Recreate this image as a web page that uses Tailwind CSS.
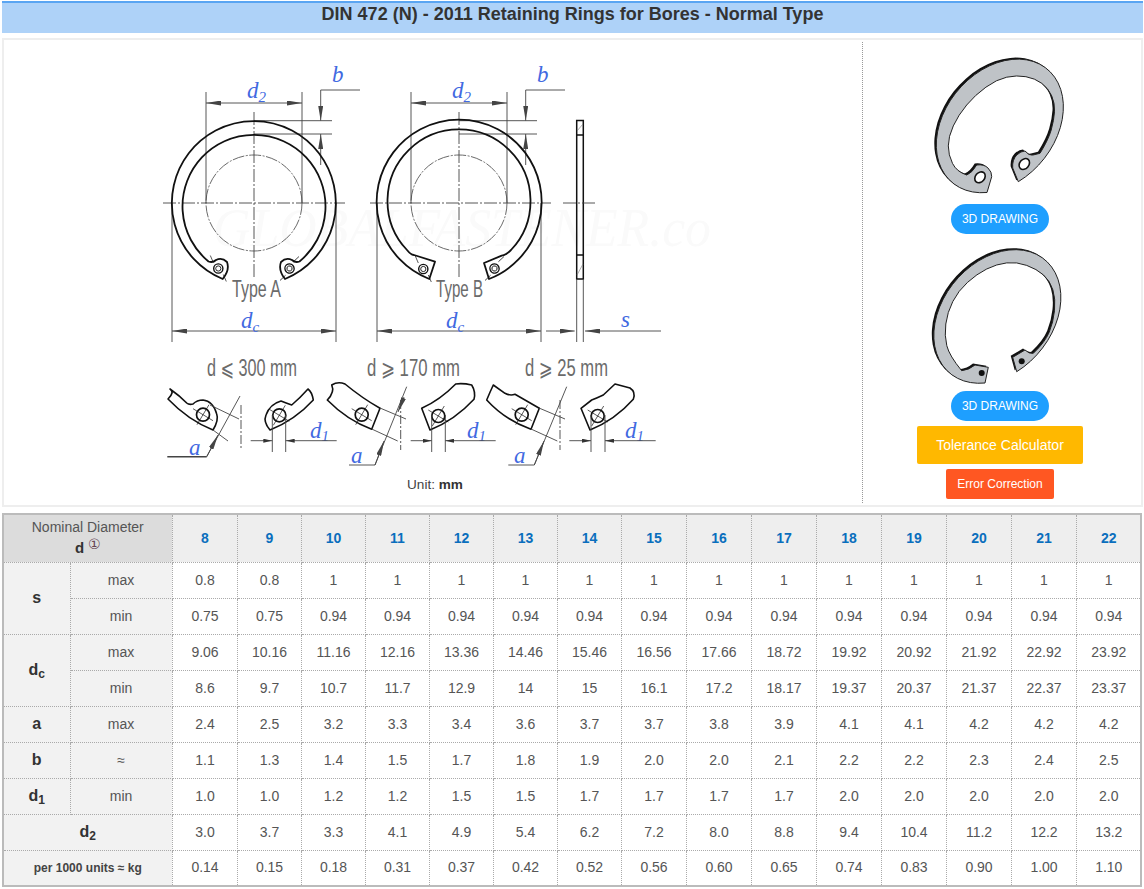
<!DOCTYPE html>
<html lang="en">
<head>
  <meta charset="UTF-8" />
  <title>DIN 472 (N) - 2011 Retaining Rings for Bores - Normal Type</title>
  <script src="https://cdn.jsdelivr.net/npm/@tailwindcss/browser@4"></script>
</head>
<body class="bg-white text-[#555] text-[14px] font-['Liberation_Sans',Arial,sans-serif]">
  <div class="w-[1141px] ml-[2px] pt-[1px]">
    <!-- title -->
    <h1 class="h-[32px] border-t-2 border-[#5aa5f2] bg-[#aed2f8] text-center text-[18px] leading-[23px] font-bold text-[#333]">DIN 472 (N) - 2011 Retaining Rings for Bores - Normal Type</h1>

    <!-- drawing panel -->
    <div class="flex h-[469px] mt-[5px] border-2 border-[#eee]">
      <div class="w-[859px] h-[461px] mt-[2px] border-r border-dotted border-[#999]">
        <svg class="block w-[858px] h-[432px]" viewBox="4 42 858 432" fill="none">
          <defs>
            <marker id="ar" markerUnits="userSpaceOnUse" markerWidth="15" markerHeight="5" refX="15" refY="2.5" orient="auto-start-reverse"><path d="M0 0L15 2.5L0 5z" fill="#444"/></marker>
            <marker id="as" markerUnits="userSpaceOnUse" markerWidth="9" markerHeight="4" refX="9" refY="2" orient="auto-start-reverse"><path d="M0 0L9 2L0 4z" fill="#333"/></marker>
            <g id="dims" stroke="#444" stroke-width="0.9">
              <path d="M206 92V203M302 92V203"/>
              <path d="M206 103H302" marker-start="url(#ar)" marker-end="url(#ar)"/>
              <path d="M254 120.7H332M254 134H332"/>
              <path d="M360 90H320.7V120.7" marker-end="url(#ar)"/>
              <path d="M320.7 165V134" marker-end="url(#ar)"/>
              <path d="M172 203V342M336 203V342"/>
              <path d="M172 331H336" marker-start="url(#ar)" marker-end="url(#ar)"/>
              <path d="M254 112V277" stroke-dasharray="13 2 2 2"/>
              <circle cx="254" cy="203" r="48" stroke-width="0.8" stroke-dasharray="12 1.5 2 1.5"/>
            </g>
            <g id="hole" stroke="#111">
              <circle r="6.5" stroke-width="1.7"/>
              <path d="M-10 -6L10 6M6 -10L-6 10" stroke-width="0.7"/>
            </g>
            <g id="ear" stroke="#111">
              <circle r="4.6" stroke-width="1.4"/>
              <circle r="2.6" stroke-width="0.9"/>
              <path d="M-8 -13L-5 -6M5 6L8 13" stroke-width="0.7"/>
            </g>
          </defs>

          <!-- watermark -->
          <text x="213" y="246" font-family="Liberation Serif" font-style="italic" font-size="54" fill="#fafafa" textLength="498" lengthAdjust="spacingAndGlyphs">GLOBALFASTENER.co</text>

          <!-- type A -->
          <use href="#dims"/>
          <path d="M163 203H345" stroke="#444" stroke-width="0.9" stroke-dasharray="13 2 2 2"/>
          <path d="M222.7 279A82 82 0 1 1 285 279Q278 270 281 262Q286 257 292 260Q295 263 299.5 261.5A71.5 71.5 0 1 0 208.5 261.5Q213 263 216 260Q222 257 227 262Q230 270 222.7 279Z" stroke="#111" stroke-width="1.8" stroke-linejoin="round"/>
          <use href="#ear" x="218.3" y="268.5"/>
          <use href="#ear" x="289.5" y="268.5" transform="rotate(70 289.5 268.5)"/>

          <!-- type B -->
          <use href="#dims" x="205"/>
          <path d="M370 203H551" stroke="#444" stroke-width="0.9" stroke-dasharray="13 2 2 2"/>
          <path d="M429.3 279A82.5 82.5 0 1 1 489 279L484 263L501.7 255.7Q506 255 511 250A71.5 71.5 0 1 0 407 250Q411 255 414 255L435 261.7Z" stroke="#111" stroke-width="1.8" stroke-linejoin="round"/>
          <use href="#ear" x="423.3" y="269"/>
          <use href="#ear" x="494.5" y="268.5" transform="rotate(70 494.5 268.5)"/>

          <!-- side view -->
          <rect x="576.7" y="120.5" width="6.6" height="158.5" stroke="#111" stroke-width="1.5"/>
          <path d="M576.7 135H583.3M576.7 255H583.3" stroke="#111" stroke-width="1.5"/>
          <path d="M577 131L583 124M577 275L583 264" stroke="#777" stroke-width="0.6"/>
          <path d="M563 203H597" stroke="#444" stroke-width="0.9" stroke-dasharray="13 2 2 2"/>
          <path d="M576.7 279V342M583.3 279V342" stroke="#444" stroke-width="0.9"/>
          <path d="M546 331H574.7" stroke="#444" stroke-width="0.9" marker-end="url(#ar)"/>
          <path d="M661 331H585" stroke="#444" stroke-width="0.9" marker-end="url(#ar)"/>

          <!-- labels -->
          <g font-family="Liberation Serif" font-style="italic" fill="#4169e1" font-size="23">
            <text x="247" y="98">d<tspan font-size="15" dy="4">2</tspan></text>
            <text x="332" y="82">b</text>
            <text x="241" y="328">d<tspan font-size="15" dy="4">c</tspan></text>
            <text x="452" y="98">d<tspan font-size="15" dy="4">2</tspan></text>
            <text x="537" y="82">b</text>
            <text x="446" y="328">d<tspan font-size="15" dy="4">c</tspan></text>
            <text x="621" y="327">s</text>
            <text x="189" y="455">a</text>
            <text x="351" y="463">a</text>
            <text x="514" y="463">a</text>
            <text x="310" y="438">d<tspan font-size="15" dy="3">1</tspan></text>
            <text x="467" y="438">d<tspan font-size="15" dy="3">1</tspan></text>
            <text x="625" y="438">d<tspan font-size="15" dy="3">1</tspan></text>
          </g>
          <g font-family="Liberation Sans, DejaVu Sans" fill="#6b6b6b" font-size="23">
            <text x="232" y="297" textLength="49" lengthAdjust="spacingAndGlyphs">Type A</text>
            <text x="436" y="297" textLength="47" lengthAdjust="spacingAndGlyphs">Type B</text>
            <text x="207" y="376" textLength="90" lengthAdjust="spacingAndGlyphs">d ⩽ 300 mm</text>
            <text x="367" y="376" textLength="93" lengthAdjust="spacingAndGlyphs">d ⩾ 170 mm</text>
            <text x="525" y="376" textLength="83" lengthAdjust="spacingAndGlyphs">d ⩾ 25 mm</text>
          </g>

          <!-- details of the lug ends -->
          <g stroke="#111" stroke-width="1.6" stroke-linejoin="round">
            <path d="M170 389Q175 392 168 399Q188 420 213 430Q219 420 216.7 414Q213 401 203 400Q197 400 193 404Q189 405 186.7 403Q180 396 170 389Z"/>
            <path d="M270 430Q263 422 266 415Q270 404 281 401Q286 403 291.7 405Q300 398 308 389Q312 392 313.3 400Q295 420 270 430Z"/>
            <path d="M345 384Q338 381 331.7 385Q335 392 327.3 400Q347 420 371.7 429.3L380 408.3Q362 398 345 384Z"/>
            <path d="M421.7 408.3L430 430Q455 420 474 399.3Q476 392 471.7 385Q463 383 455.7 384Q440 400 421.7 408.3Z"/>
            <path d="M493.3 385Q490 392 486.7 400Q505 420 531 429.3L539.3 408.3L515 394.3Q510 396 505 393.3Z"/>
            <path d="M581 408.3L590 430Q615 420 633.3 399.3Q636 392 630 388L615 384L603.3 395Q597 398 591.7 400Z"/>
          </g>
          <use href="#hole" x="203" y="414.7"/>
          <use href="#hole" x="279.3" y="415.3"/>
          <use href="#hole" x="361.7" y="414.7"/>
          <use href="#hole" x="438.3" y="416"/>
          <use href="#hole" x="521.7" y="414.7"/>
          <use href="#hole" x="597.7" y="416"/>

          <g stroke="#444" stroke-width="0.9">
            <path d="M210 405L239 419M213 430L228 441"/>
            <path d="M241 405V450" stroke-dasharray="9 2 2 2"/>
            <path d="M240 396L206.7 456.7"/>
            <path d="M206.7 456.7H167.3" stroke-width="1.5"/>
            <path d="M206.7 456.7L218 435" marker-end="url(#ar)"/>
            <path d="M272.3 415V452M285.7 415V452"/>
            <path d="M250.7 440.7H272.3" marker-end="url(#as)"/>
            <path d="M336.7 440.7H285.7" marker-end="url(#as)"/>

            <path d="M380 408L406 419M371.7 429L397.7 441"/>
            <path d="M400.7 400V450" stroke-dasharray="9 2 2 2"/>
            <path d="M406.7 386.7L375 465H349"/>
            <path d="M375 465L384 441" marker-end="url(#ar)"/>
            <path d="M398 412L404 397" marker-start="url(#ar)"/>
            <path d="M431.7 415V452M445.3 415V452"/>
            <path d="M410.7 440.7H431.7" marker-end="url(#as)"/>
            <path d="M495.7 440.7H445.3" marker-end="url(#as)"/>

            <path d="M539 408L565 419M531 429L557.3 441"/>
            <path d="M560 400V450" stroke-dasharray="9 2 2 2"/>
            <path d="M566.7 386.7L534.3 465H508.3"/>
            <path d="M534.3 465L544 441" marker-end="url(#ar)"/>
            <path d="M591 415V452M605 415V452"/>
            <path d="M569.3 440.7H591" marker-end="url(#as)"/>
            <path d="M655.7 440.7H605" marker-end="url(#as)"/>
          </g>
        </svg>
        <div class="mt-[1px] pl-[4px] text-center text-[13.6px] leading-5 text-[#444]">Unit: <b class="text-[#333]">mm</b></div>
      </div>

      <!-- 3D views and buttons -->
      <div class="w-[274px] flex flex-col items-center">
        <svg class="block w-[140px] h-[154px] mt-[10px]" viewBox="930 50 140 154">
          <g stroke-linejoin="round">
            <path transform="translate(-2 -1.5)" d="M987 192.5A74 55 -50 1 1 1018.3 181.7L1012.7 168Q1012 160 1016.7 155Q1021 151 1025 151Q1029 156 1033 155L1040 153.3Q1048.3 140 1051.2 130Q1054 120 1054.5 111.7Q1055 103.3 1051.7 95.8Q1048.3 88.3 1041.7 83.3Q1035 78.3 1025.9 76.7Q1016.7 75 1006.7 77.2Q996.7 79.3 985.9 87.2Q975 95 966.7 105Q958.3 115 953.3 125.9Q948.3 136.7 948.3 145.9Q948.3 155 952.5 163.4Q956.7 171.7 966.7 175Q972 173 976.7 165Q984 164 988 168Q992 172 991.7 176.7Z" fill="#111"/>
            <path d="M987 192.5A74 55 -50 1 1 1018.3 181.7L1012.7 168Q1012 160 1016.7 155Q1021 151 1025 151Q1029 156 1033 155L1040 153.3Q1048.3 140 1051.2 130Q1054 120 1054.5 111.7Q1055 103.3 1051.7 95.8Q1048.3 88.3 1041.7 83.3Q1035 78.3 1025.9 76.7Q1016.7 75 1006.7 77.2Q996.7 79.3 985.9 87.2Q975 95 966.7 105Q958.3 115 953.3 125.9Q948.3 136.7 948.3 145.9Q948.3 155 952.5 163.4Q956.7 171.7 966.7 175Q972 173 976.7 165Q984 164 988 168Q992 172 991.7 176.7Z" fill="#bfc3c7" stroke="#222" stroke-width="1"/>
          </g>
          <ellipse cx="980" cy="177.3" rx="6" ry="4.6" transform="rotate(-50 980 177.3)" fill="#fff" stroke="#111" stroke-width="1.6"/>
          <ellipse cx="1024.3" cy="164" rx="6" ry="4.6" transform="rotate(-50 1024.3 164)" fill="#fff" stroke="#111" stroke-width="1.6"/>
        </svg>
        <a class="w-[98px] h-[30px] rounded-full bg-[#1e9fff] text-white text-center text-[12px] leading-[30px]">3D DRAWING</a>
        <svg class="block w-[140px] h-[147px] mt-[8px]" viewBox="930 238 140 147">
          <g stroke-linejoin="round">
            <path transform="translate(-2 -1.5)" d="M985 379A74 55 -50 1 1 1016.7 367.7L1012.7 353.3L1025 346Q1029 350 1033.3 349.3Q1045 338.3 1049.2 328.3Q1053.3 318.3 1054.5 306.7Q1055.7 295 1052.9 285.9Q1050 276.7 1043.4 270.9Q1036.7 265 1026.7 261.4Q1016.7 257.7 1006.7 258.9Q996.7 260 986.7 265Q976.7 270 967.5 278.4Q958.3 286.7 952.8 297.5Q947.3 308.3 945.8 320Q944.3 331.7 946.8 341.7Q949.3 351.7 961.7 366.7Q969 366 975 361L988.3 363.3Z" fill="#111"/>
            <path d="M985 379A74 55 -50 1 1 1016.7 367.7L1012.7 353.3L1025 346Q1029 350 1033.3 349.3Q1045 338.3 1049.2 328.3Q1053.3 318.3 1054.5 306.7Q1055.7 295 1052.9 285.9Q1050 276.7 1043.4 270.9Q1036.7 265 1026.7 261.4Q1016.7 257.7 1006.7 258.9Q996.7 260 986.7 265Q976.7 270 967.5 278.4Q958.3 286.7 952.8 297.5Q947.3 308.3 945.8 320Q944.3 331.7 946.8 341.7Q949.3 351.7 961.7 366.7Q969 366 975 361L988.3 363.3Z" fill="#bfc3c7" stroke="#222" stroke-width="1"/>
          </g>
          <circle cx="981.7" cy="369" r="3" fill="#111"/>
          <circle cx="1021.7" cy="357.3" r="3" fill="#111"/>
        </svg>
        <a class="w-[98px] h-[30px] mt-[2px] rounded-full bg-[#1e9fff] text-white text-center text-[12px] leading-[30px]">3D DRAWING</a>
        <a class="w-[166px] h-[38px] mt-[5px] rounded-[2px] bg-[#ffb800] text-white text-center text-[14px] leading-[38px]">Tolerance Calculator</a>
        <a class="w-[108px] h-[30px] mt-[5px] rounded-[2px] bg-[#ff5722] text-white text-center text-[12px] leading-[30px]">Error Correction</a>
      </div>
    </div>

    <!-- size table -->
    <table class="mt-[6px] w-[1139px] table-fixed border-collapse border-2 border-[#bbb] text-center text-[14px] text-[#555] [&_td]:border [&_td]:border-dotted [&_td]:border-[#aaa] [&_td]:p-0 [&_th]:border [&_th]:border-dotted [&_th]:border-[#aaa] [&_th]:p-0 [&_tr]:h-[36px] [&_td:nth-last-child(-n+15)]:pl-[1px] [&_th:nth-last-child(-n+15)]:pl-[1px]">
      <colgroup>
        <col class="w-[67px]"><col class="w-[102px]">
        <col class="w-[65px]"><col class="w-[64px]"><col class="w-[64px]"><col class="w-[64px]"><col class="w-[64px]"><col class="w-[64px]"><col class="w-[64px]">
        <col class="w-[65px]"><col class="w-[65px]"><col class="w-[65px]"><col class="w-[65px]"><col class="w-[65px]"><col class="w-[65px]"><col class="w-[65px]"><col class="w-[65px]">
      </colgroup>
      <thead>
        <tr class="!h-[48px] bg-[#eee] text-[#0a6ebd] font-bold">
          <th colspan="2" class="bg-[#dcdcdc] font-normal text-[#555] leading-[17px]">Nominal Diameter<br><b class="text-[15px] text-[#333]">d</b> <span class="font-['DejaVu_Sans'] text-[14px] align-[4px] text-[#645]">①</span></th>
          <th>8</th><th>9</th><th>10</th><th>11</th><th>12</th><th>13</th><th>14</th><th>15</th><th>16</th><th>17</th><th>18</th><th>19</th><th>20</th><th>21</th><th>22</th>
        </tr>
      </thead>
      <tbody>
        <tr><td rowspan="2" class="bg-[#f2f2f2] font-bold text-[16px] text-[#333]">s</td><td class="bg-[#f2f2f2] pl-[1px]">max</td><td>0.8</td><td>0.8</td><td>1</td><td>1</td><td>1</td><td>1</td><td>1</td><td>1</td><td>1</td><td>1</td><td>1</td><td>1</td><td>1</td><td>1</td><td>1</td></tr>
        <tr><td class="bg-[#f2f2f2] pl-[1px]">min</td><td>0.75</td><td>0.75</td><td>0.94</td><td>0.94</td><td>0.94</td><td>0.94</td><td>0.94</td><td>0.94</td><td>0.94</td><td>0.94</td><td>0.94</td><td>0.94</td><td>0.94</td><td>0.94</td><td>0.94</td></tr>
        <tr><td rowspan="2" class="bg-[#f2f2f2] font-bold text-[16px] text-[#333]">d<sub>c</sub></td><td class="bg-[#f2f2f2] pl-[1px]">max</td><td>9.06</td><td>10.16</td><td>11.16</td><td>12.16</td><td>13.36</td><td>14.46</td><td>15.46</td><td>16.56</td><td>17.66</td><td>18.72</td><td>19.92</td><td>20.92</td><td>21.92</td><td>22.92</td><td>23.92</td></tr>
        <tr><td class="bg-[#f2f2f2] pl-[1px]">min</td><td>8.6</td><td>9.7</td><td>10.7</td><td>11.7</td><td>12.9</td><td>14</td><td>15</td><td>16.1</td><td>17.2</td><td>18.17</td><td>19.37</td><td>20.37</td><td>21.37</td><td>22.37</td><td>23.37</td></tr>
        <tr><td class="bg-[#f2f2f2] font-bold text-[16px] text-[#333]">a</td><td class="bg-[#f2f2f2] pl-[1px]">max</td><td>2.4</td><td>2.5</td><td>3.2</td><td>3.3</td><td>3.4</td><td>3.6</td><td>3.7</td><td>3.7</td><td>3.8</td><td>3.9</td><td>4.1</td><td>4.1</td><td>4.2</td><td>4.2</td><td>4.2</td></tr>
        <tr><td class="bg-[#f2f2f2] font-bold text-[16px] text-[#333]">b</td><td class="bg-[#f2f2f2] pl-[1px]">≈</td><td>1.1</td><td>1.3</td><td>1.4</td><td>1.5</td><td>1.7</td><td>1.8</td><td>1.9</td><td>2.0</td><td>2.0</td><td>2.1</td><td>2.2</td><td>2.2</td><td>2.3</td><td>2.4</td><td>2.5</td></tr>
        <tr><td class="bg-[#f2f2f2] font-bold text-[16px] text-[#333]">d<sub>1</sub></td><td class="bg-[#f2f2f2] pl-[1px]">min</td><td>1.0</td><td>1.0</td><td>1.2</td><td>1.2</td><td>1.5</td><td>1.5</td><td>1.7</td><td>1.7</td><td>1.7</td><td>1.7</td><td>2.0</td><td>2.0</td><td>2.0</td><td>2.0</td><td>2.0</td></tr>
        <tr><td colspan="2" class="bg-[#f2f2f2] font-bold text-[16px] text-[#333]">d<sub>2</sub></td><td>3.0</td><td>3.7</td><td>3.3</td><td>4.1</td><td>4.9</td><td>5.4</td><td>6.2</td><td>7.2</td><td>8.0</td><td>8.8</td><td>9.4</td><td>10.4</td><td>11.2</td><td>12.2</td><td>13.2</td></tr>
        <tr><td colspan="2" class="bg-[#f2f2f2] font-bold text-[12px] text-[#444]">per 1000 units ≈ kg</td><td>0.14</td><td>0.15</td><td>0.18</td><td>0.31</td><td>0.37</td><td>0.42</td><td>0.52</td><td>0.56</td><td>0.60</td><td>0.65</td><td>0.74</td><td>0.83</td><td>0.90</td><td>1.00</td><td>1.10</td></tr>
      </tbody>
    </table>
  </div>
</body>
</html>
